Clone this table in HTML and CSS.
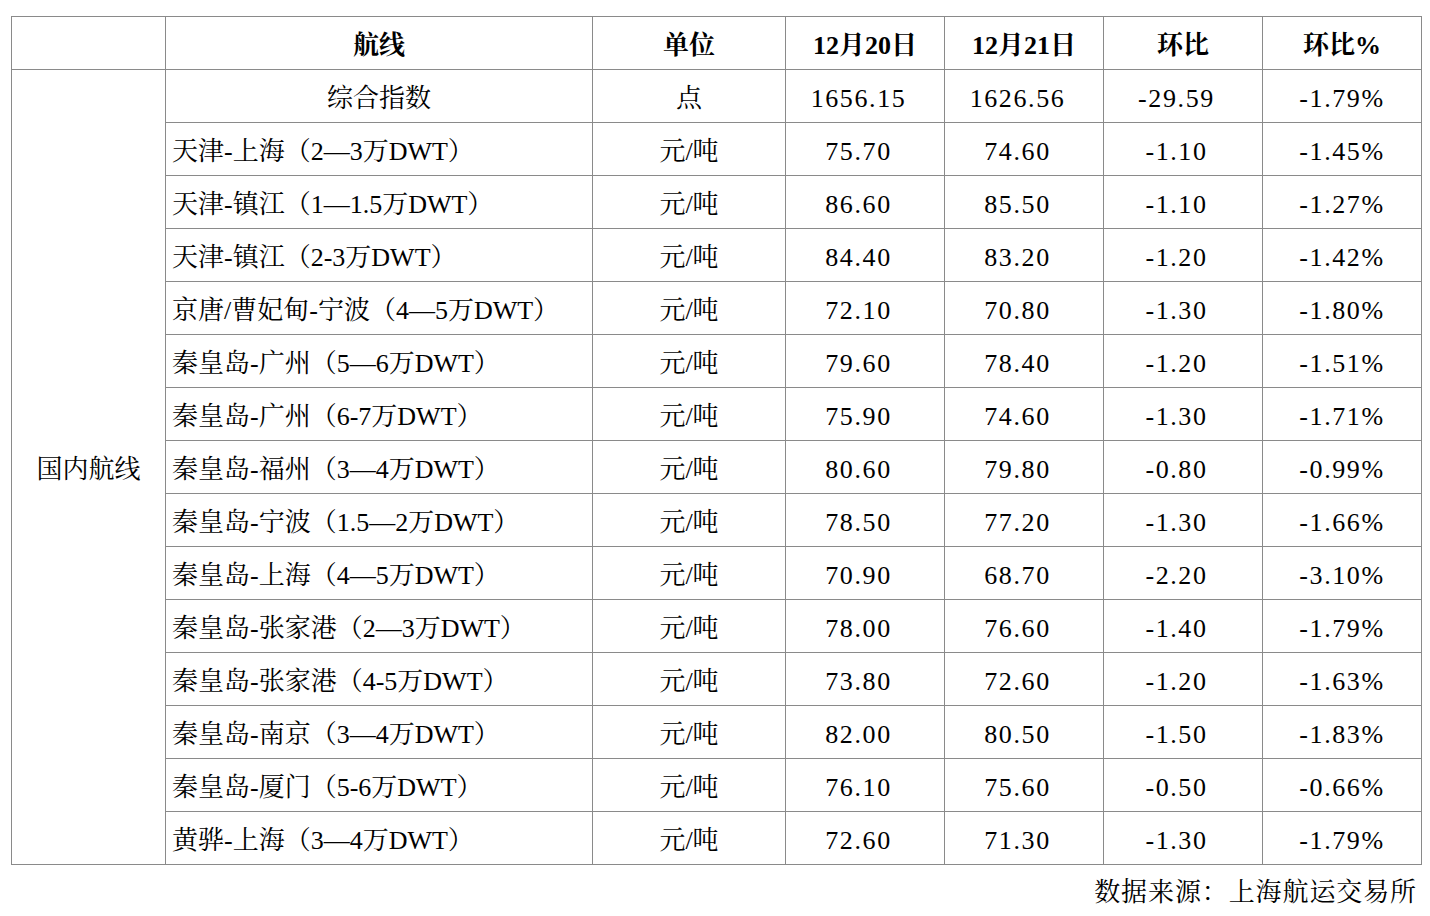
FILE: index.html
```html
<!DOCTYPE html>
<html lang="zh-CN">
<head>
<meta charset="utf-8">
<link rel="stylesheet" href="styles.css">
</head>
<body>
<div class="wrap">
<table class="data">
  <colgroup>
    <col class="c1"><col class="c2"><col class="c3"><col class="c4"><col class="c5"><col class="c6"><col class="c7">
  </colgroup>
  <thead>
    <tr><th></th><th>航线</th><th>单位</th><th>12月20日</th><th>12月21日</th><th>环比</th><th>环比%</th></tr>
  </thead>
  <tbody>
    <tr><td class="group" rowspan="15">国内航线</td><td class="mid">综合指数</td><td>点</td><td class="n">1656.15</td><td class="n">1626.56</td><td class="n">-29.59</td><td class="p">-1.79%</td></tr>
    <tr><td class="route">天津-上海（2—3万DWT）</td><td>元/吨</td><td class="n">75.70</td><td class="n">74.60</td><td class="n">-1.10</td><td class="p">-1.45%</td></tr>
    <tr><td class="route">天津-镇江（1—1.5万DWT）</td><td>元/吨</td><td class="n">86.60</td><td class="n">85.50</td><td class="n">-1.10</td><td class="p">-1.27%</td></tr>
    <tr><td class="route">天津-镇江（2-3万DWT）</td><td>元/吨</td><td class="n">84.40</td><td class="n">83.20</td><td class="n">-1.20</td><td class="p">-1.42%</td></tr>
    <tr><td class="route">京唐/曹妃甸-宁波（4—5万DWT）</td><td>元/吨</td><td class="n">72.10</td><td class="n">70.80</td><td class="n">-1.30</td><td class="p">-1.80%</td></tr>
    <tr><td class="route">秦皇岛-广州（5—6万DWT）</td><td>元/吨</td><td class="n">79.60</td><td class="n">78.40</td><td class="n">-1.20</td><td class="p">-1.51%</td></tr>
    <tr><td class="route">秦皇岛-广州（6-7万DWT）</td><td>元/吨</td><td class="n">75.90</td><td class="n">74.60</td><td class="n">-1.30</td><td class="p">-1.71%</td></tr>
    <tr><td class="route">秦皇岛-福州（3—4万DWT）</td><td>元/吨</td><td class="n">80.60</td><td class="n">79.80</td><td class="n">-0.80</td><td class="p">-0.99%</td></tr>
    <tr><td class="route">秦皇岛-宁波（1.5—2万DWT）</td><td>元/吨</td><td class="n">78.50</td><td class="n">77.20</td><td class="n">-1.30</td><td class="p">-1.66%</td></tr>
    <tr><td class="route">秦皇岛-上海（4—5万DWT）</td><td>元/吨</td><td class="n">70.90</td><td class="n">68.70</td><td class="n">-2.20</td><td class="p">-3.10%</td></tr>
    <tr><td class="route">秦皇岛-张家港（2—3万DWT）</td><td>元/吨</td><td class="n">78.00</td><td class="n">76.60</td><td class="n">-1.40</td><td class="p">-1.79%</td></tr>
    <tr><td class="route">秦皇岛-张家港（4-5万DWT）</td><td>元/吨</td><td class="n">73.80</td><td class="n">72.60</td><td class="n">-1.20</td><td class="p">-1.63%</td></tr>
    <tr><td class="route">秦皇岛-南京（3—4万DWT）</td><td>元/吨</td><td class="n">82.00</td><td class="n">80.50</td><td class="n">-1.50</td><td class="p">-1.83%</td></tr>
    <tr><td class="route">秦皇岛-厦门（5-6万DWT）</td><td>元/吨</td><td class="n">76.10</td><td class="n">75.60</td><td class="n">-0.50</td><td class="p">-0.66%</td></tr>
    <tr><td class="route">黄骅-上海（3—4万DWT）</td><td>元/吨</td><td class="n">72.60</td><td class="n">71.30</td><td class="n">-1.30</td><td class="p">-1.79%</td></tr>
  </tbody>
</table>
<div class="source">数据来源：上海航运交易所</div>
</div>
</body>
</html>
```

FILE: styles.css
```css
html, body {
  margin: 0;
  padding: 0;
  background: #ffffff;
}
body {
  font-family: "Liberation Serif", "Noto Serif CJK SC", "Noto Sans CJK SC", serif;
  color: #000000;
}
.wrap {
  padding: 16px 0 0 11px;
  width: 1411px;
}
.data {
  border-collapse: collapse;
  table-layout: fixed;
  width: 1411px;
}
.c1 { width: 154px; }
.c2 { width: 427px; }
.c3 { width: 193px; }
.c4 { width: 159px; }
.c5 { width: 159px; }
.c6 { width: 159px; }
.c7 { width: 159px; }
.data th, .data td {
  border: 1px solid #8a8a8a;
  height: 46px;
  padding: 6px 0 0 0;
  font-size: 26px;
  line-height: 30px;
  text-align: center;
  vertical-align: middle;
  white-space: nowrap;
  font-weight: normal;
}
.data th {
  font-weight: bold;
}
.data td.route {
  text-align: left;
  padding-left: 6px;
}
.data td.n {
  letter-spacing: 1.6px;
  padding-right: 13px;
}
.data td.p {
  letter-spacing: 1.6px;
}
.source {
  text-align: right;
  font-size: 26px;
  line-height: 30px;
  margin-top: 13px;
  padding-right: 5px;
  letter-spacing: 0.9px;
}
```
